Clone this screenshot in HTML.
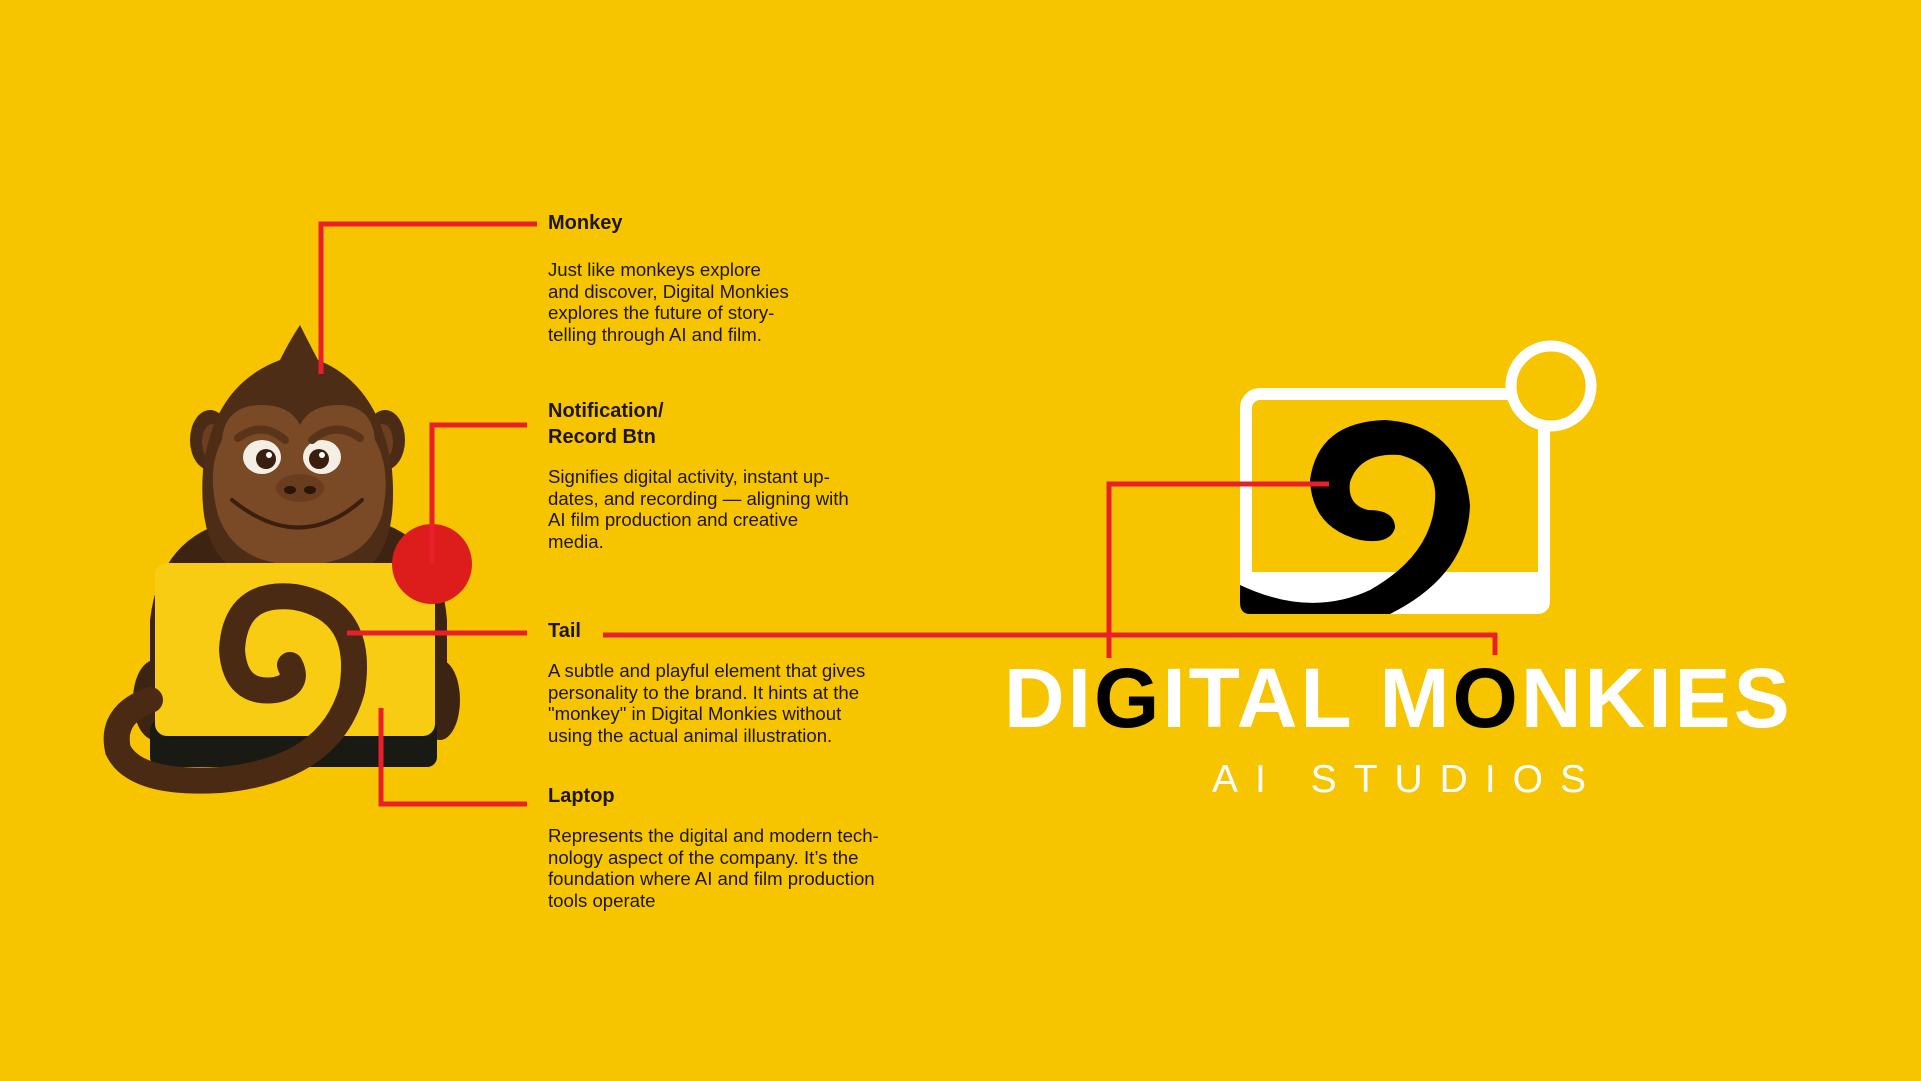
<!DOCTYPE html>
<html><head><meta charset="utf-8">
<style>
html,body{margin:0;padding:0;}
body{width:1921px;height:1081px;background:#F7C400;position:relative;overflow:hidden;font-family:"Liberation Sans",sans-serif;color:#1d1608;}
.t{position:absolute;left:548px;font-weight:bold;font-size:20px;}
.b{position:absolute;left:548px;font-size:18.6px;line-height:21.6px;}
svg{position:absolute;left:0;top:0;}
</style></head><body>
<svg width="1921" height="1081" viewBox="0 0 1921 1081">
  <path d="M150 735 L150 620 Q160 535 235 520 L370 520 Q440 535 447 620 L447 735 Z" fill="#3d2412"/>
  <ellipse cx="155" cy="700" rx="22" ry="40" fill="#3d2412"/>
  <ellipse cx="440" cy="700" rx="20" ry="40" fill="#3d2412"/>
  <ellipse cx="210" cy="440" rx="20" ry="30" fill="#4a2b15"/>
  <ellipse cx="385" cy="440" rx="20" ry="30" fill="#4a2b15"/>
  <ellipse cx="212" cy="442" rx="10" ry="18" fill="#6b3f20"/>
  <ellipse cx="383" cy="442" rx="10" ry="18" fill="#6b3f20"/>
  <path d="M300 325 Q310 345 318 360 Q380 385 392 470 Q398 540 370 565 L228 565 Q198 540 203 470 Q213 385 280 360 Q290 340 300 325 Z" fill="#4e2d16"/>
  <path d="M222 440 Q225 405 262 405 Q290 405 300 425 Q310 405 338 405 Q372 405 375 440 Q392 470 382 515 Q365 565 300 565 Q235 565 218 515 Q206 470 222 440 Z" fill="#7a4a27"/>
  <ellipse cx="262" cy="457" rx="19" ry="17" fill="#f4eee4"/>
  <ellipse cx="322" cy="457" rx="19" ry="17" fill="#f4eee4"/>
  <circle cx="266" cy="459" r="10" fill="#3a1f0e"/>
  <circle cx="319" cy="459" r="10" fill="#3a1f0e"/>
  <circle cx="269" cy="455" r="3" fill="#fff"/>
  <circle cx="322" cy="455" r="3" fill="#fff"/>
  <path d="M238 438 Q262 420 285 440" stroke="#5a3419" stroke-width="8" fill="none" stroke-linecap="round"/>
  <path d="M312 440 Q336 420 360 438" stroke="#5a3419" stroke-width="8" fill="none" stroke-linecap="round"/>
  <ellipse cx="300" cy="488" rx="24" ry="14" fill="#6a3d1f"/>
  <ellipse cx="290" cy="490" rx="6" ry="4" fill="#2a1508"/>
  <ellipse cx="310" cy="490" rx="6" ry="4" fill="#2a1508"/>
  <path d="M232 500 Q300 555 362 500" stroke="#3a1f0e" stroke-width="4" fill="none" stroke-linecap="round"/>
  <rect x="150" y="720" width="287" height="47" rx="10" fill="#1a1a14"/>
  <rect x="155" y="563" width="280" height="173" rx="12" fill="#F9CC14"/>
  <path d="M150 700 Q110 715 118 750 Q135 785 220 780 Q330 770 352 690 Q365 610 295 597 Q235 590 232 650 Q235 695 275 690 Q300 685 290 665" stroke="#4b2a14" stroke-width="26" fill="none" stroke-linecap="round"/>
  <circle cx="432" cy="564" r="40" fill="#DD1C1C"/>
  <g stroke="#E8202A" stroke-width="5" fill="none">
    <path d="M321 374 V224 H537"/>
    <path d="M432 564 V425 H527"/>
    <path d="M347 633 H527"/>
    <path d="M381 708 V804 H527"/>
    <path d="M603 635 H1495 V655"/>
  </g>
  <rect x="1246" y="394" width="298" height="213" rx="14" fill="none" stroke="#fff" stroke-width="12"/>
  <rect x="1240" y="572" width="310" height="42" rx="12" fill="#fff"/>
  <circle cx="1551" cy="386" r="40" fill="#F7C400" stroke="#fff" stroke-width="11"/>
  <path d="M1395 528 Q1390 545 1360 540 Q1312 528 1310 480 Q1318 422 1385 420 Q1462 425 1470 505 Q1468 575 1390 614 L1250 614 Q1240 614 1240 602 L1240 585 Q1310 618 1370 590 Q1432 555 1435 500 Q1438 465 1400 455 Q1360 452 1350 482 Q1347 505 1368 510 Q1395 510 1395 528 Z" fill="#000"/>
  <path d="M1109 658 V484 H1329" stroke="#E8202A" stroke-width="5" fill="none"/>
</svg>
<div class="t" style="top:212px">Monkey</div>
<div class="b" style="top:259px">Just like monkeys explore<br>and discover, Digital Monkies<br>explores the future of story-<br>telling through AI and film.</div>
<div class="t" style="top:398px;line-height:26px">Notification/<br>Record Btn</div>
<div class="b" style="top:466px">Signifies digital activity, instant up-<br>dates, and recording — aligning with<br>AI film production and creative<br>media.</div>
<div class="t" style="top:620px">Tail</div>
<div class="b" style="top:660px">A subtle and playful element that gives<br>personality to the brand. It hints at the<br>"monkey" in Digital Monkies without<br>using the actual animal illustration.</div>
<div class="t" style="top:785px">Laptop</div>
<div class="b" style="top:825px">Represents the digital and modern tech-<br>nology aspect of the company. It’s the<br>foundation where AI and film production<br>tools operate</div>
<div style="position:absolute;left:1004px;top:656px;font-weight:bold;font-size:84px;color:#fff;letter-spacing:3px;white-space:nowrap;line-height:1">DI<span style="color:#000">G</span>ITAL M<span style="color:#000">O</span>NKIES</div>
<div style="position:absolute;left:1212px;top:760px;font-size:39px;color:#fff;letter-spacing:17px;white-space:nowrap;line-height:1">AI STUDIOS</div>
</body></html>
